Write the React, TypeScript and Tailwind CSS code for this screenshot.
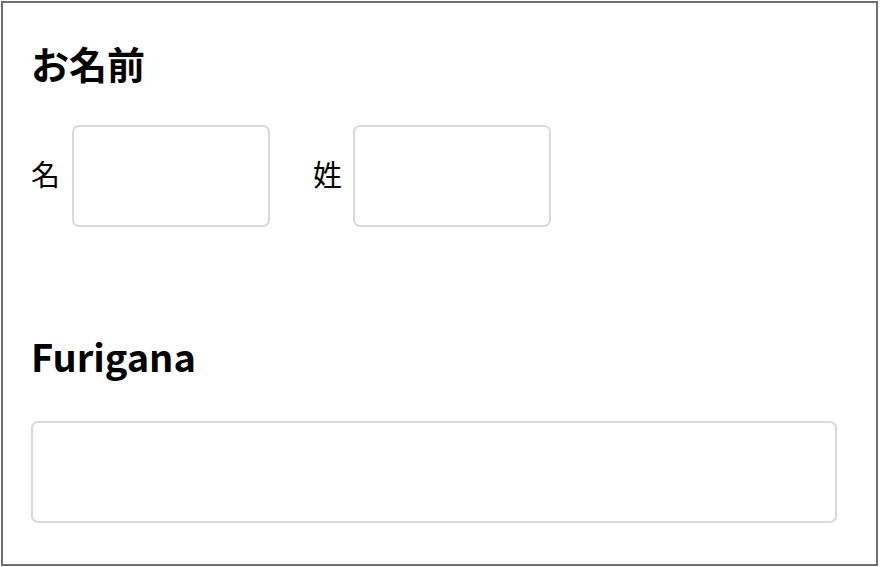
import React from 'react';

const font = { fontFamily: '"Noto Sans CJK JP", "Noto Sans", sans-serif' };

export default function App() {
  return (
    <div className="w-[880px] h-[567px] bg-white" style={font}>
      <div className="ml-px mt-px w-[877px] h-[565px] border-2 border-[#6f6f6f] bg-white pl-[28px] pr-[40px]">
        <h2 className="mt-[32px] text-[38px] leading-[56px] font-bold text-black">お名前</h2>

        <div className="mt-[34px] flex items-center">
          <label className="mb-[5px] text-[29px] leading-none text-black">名</label>
          <input className="ml-[12px] w-[198px] h-[102px] rounded-[7px] border-2 border-[#d9d9d9] bg-white outline-none" />
          <label className="mb-[5px] ml-[43px] text-[29px] leading-none text-black">姓</label>
          <input className="ml-[11px] w-[198px] h-[102px] rounded-[7px] border-2 border-[#d9d9d9] bg-white outline-none" />
        </div>

        <h2 className="mt-[101px] text-[38px] leading-[56px] font-bold text-black">Furigana</h2>

        <input className="mt-[37px] block w-[806px] h-[102px] rounded-[7px] border-2 border-[#d9d9d9] bg-white outline-none" />
      </div>
    </div>
  );
}
